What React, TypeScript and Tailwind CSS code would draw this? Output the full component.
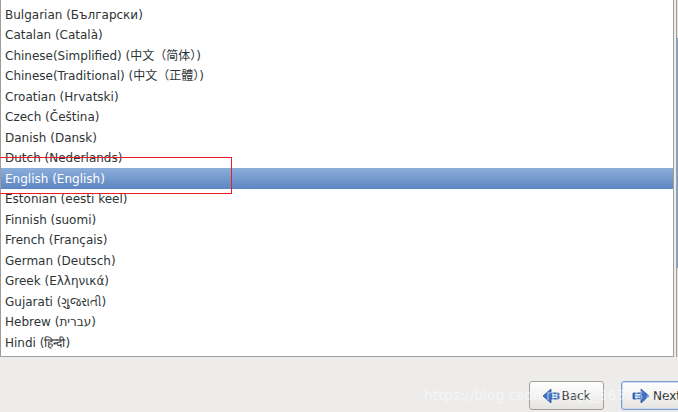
const languages = [
  "Bulgarian (Български)",
  "Catalan (Català)",
  "Chinese(Simplified) (中文（简体）)",
  "Chinese(Traditional) (中文（正體）)",
  "Croatian (Hrvatski)",
  "Czech (Čeština)",
  "Danish (Dansk)",
  "Dutch (Nederlands)",
  "English (English)",
  "Estonian (eesti keel)",
  "Finnish (suomi)",
  "French (Français)",
  "German (Deutsch)",
  "Greek (Ελληνικά)",
  "Gujarati (ગુજરાતી)",
  "Hebrew (עברית)",
  "Hindi (हिन्दी)",
];

const selected = "English (English)";

function BackIcon() {
  return (
    <svg width="18" height="16" viewBox="0 0 18 16">
      <path d="M1 8 L9 1 L9 5 L17 5 L17 11 L9 11 L9 15 Z" fill="#3f73c4" stroke="#28529a" strokeWidth="0.8" />
      <path d="M10 6.5 H15 M10 8 H15 M10 9.5 H15" stroke="#dce8f8" strokeWidth="0.9" />
    </svg>
  );
}

function NextIcon() {
  return (
    <svg width="18" height="16" viewBox="0 0 18 16">
      <path d="M17 8 L9 1 L9 5 L1 5 L1 11 L9 11 L9 15 Z" fill="#3f73c4" stroke="#28529a" strokeWidth="0.8" />
      <path d="M3 6.5 H8 M3 8 H8 M3 9.5 H8" stroke="#dce8f8" strokeWidth="0.9" />
    </svg>
  );
}

export default function App() {
  return (
    <div
      className="relative w-[678px] h-[412px] overflow-hidden bg-[#edeceb] text-[12px] text-[#2e3436]"
      style={{ fontFamily: '"DejaVu Sans", "Noto Sans CJK SC", sans-serif' }}
    >
      <div className="flex h-[357px]">
        <div className="w-[674px] shrink-0 h-full bg-white border border-t-0 border-[#a09e9b] pt-[4px] overflow-hidden">
          {languages.map((lang) => (
            <div
              key={lang}
              className={
                lang === selected
                  ? "h-[20.5px] flex items-center pl-[4px] pt-[1px] text-white bg-gradient-to-b from-[#8badda] to-[#5d86c1]"
                  : "h-[20.5px] flex items-center pl-[4px] pt-[1px]"
              }
            >
              {lang}
            </div>
          ))}
        </div>
        <div className="ml-[2px] w-[4px] shrink-0 h-full border-l border-[#a09e9b] flex flex-col">
          <div className="h-[38px] bg-[#e4e2df]" />
          <div className="h-[230px] bg-[#7a9fd6]" />
          <div className="flex-1 bg-[#e4e2df]" />
        </div>
      </div>

      <div className="flex items-start pt-[24px] pl-[529px] gap-[17px] w-max">
        <button className="w-[75px] h-[29px] shrink-0 flex items-center justify-center gap-[1px] rounded-[3px] border border-[#a2a09d] bg-gradient-to-b from-white to-[#e6e5e3] text-[12px] text-[#2e3436]">
          <BackIcon />
          <span>Back</span>
        </button>
        <button className="w-[80px] h-[29px] shrink-0 flex items-center gap-[3px] pl-[10px] rounded-[3px] border border-[#7c9dd0] bg-gradient-to-b from-white to-[#e6e5e3] text-[12px] text-[#2e3436] shadow-[inset_0_0_0_1px_#c9d9f0]">
          <NextIcon />
          <span>Next</span>
        </button>
      </div>

      <div className="absolute left-[-2px] top-[157px] w-[234px] h-[37px] shadow-[inset_0_0_0_1px_#ec1c24]" />

      <div className="absolute left-[424px] top-[385px] text-[14px] text-white/50 whitespace-nowrap">
        https://blog.csdn.net/qq_36578777
      </div>
    </div>
  );
}
